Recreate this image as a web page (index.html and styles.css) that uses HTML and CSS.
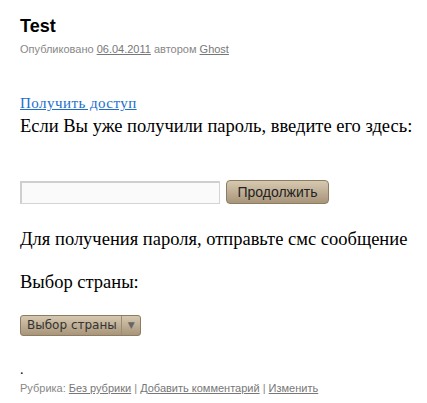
FILE: index.html
```html
<!DOCTYPE html>
<html>
<head>
<meta charset="utf-8">
<link rel="stylesheet" href="styles.css">
</head>
<body>
<div class="post">
  <h1 class="title">Test</h1>
  <div class="meta">Опубликовано <a href="#">06.04.2011</a> автором <a href="#">Ghost</a></div>
  <div class="content">
    <a class="access" href="#">Получить доступ</a>
    <p class="lead">Если Вы уже получили пароль, введите его здесь:</p>
    <form class="pass-form">
      <input class="pass-input" type="text">
      <button class="btn" type="button">Продолжить</button>
    </form>
    <p class="text">Для получения пароля, отправьте смс сообщение</p>
    <p class="text">Выбор страны:</p>
    <div class="select">
      <span class="select-label">Выбор страны</span>
      <span class="select-arrow">▼</span>
    </div>
    <p class="dot">.</p>
  </div>
  <div class="footer">Рубрика: <a href="#">Без рубрики</a> | <a href="#">Добавить комментарий</a> | <a href="#">Изменить</a></div>
</div>
</body>
</html>
```

FILE: styles.css
```css
html, body { margin: 0; padding: 0; background: #fff; }
.post { padding: 14px 4px 0 20px; }
.title {
  margin: 0;
  font-family: "Liberation Sans", Arial, sans-serif;
  font-weight: bold;
  font-size: 18px;
  line-height: 24px;
  color: #000;
}
.meta, .footer {
  font-family: "Liberation Sans", Arial, sans-serif;
  font-size: 11px;
  line-height: 16px;
  color: #888;
}
.meta { margin-top: 3px; }
.meta a, .footer a { color: #777; text-decoration: underline; }
.content {
  font-family: "Liberation Serif", "Times New Roman", serif;
  color: #000;
  margin-top: 37px;
}
.access {
  display: block;
  font-size: 15px;
  letter-spacing: 0.45px;
  line-height: 18px;
  color: #1a6ecc;
  text-decoration: underline;
}
.lead, .text {
  margin: 0;
  font-size: 18.5px;
  line-height: 24px;
  white-space: nowrap;
}
.lead { margin-top: 2px; }
.pass-form {
  margin: 42px 0 23px;
  display: flex;
  align-items: center;
  gap: 6px;
}
.pass-input {
  box-sizing: border-box;
  width: 200px;
  height: 23px;
  margin: 0;
  border: 1px solid #d4d4d4;
  border-top: 2px solid #cfcfcf;
  border-left: 2px solid #cfcfcf;
  background: #fafafa;
}
.btn {
  box-sizing: border-box;
  width: 103px;
  height: 24px;
  margin: 0;
  padding: 0;
  border: 1px solid #8c7c62;
  border-radius: 4px;
  background: linear-gradient(#d6c8b0, #a8957a);
  font-family: "Liberation Sans", Arial, sans-serif;
  font-size: 14px;
  color: #222;
}
.text + .text { margin-top: 19px; }
.select {
  margin-top: 21px;
  display: inline-flex;
  align-items: stretch;
  box-sizing: border-box;
  height: 21px;
  border: 1px solid #8c7c62;
  border-radius: 3px;
  background: linear-gradient(#d6c8b0, #a8957a);
  font-family: "DejaVu Sans", sans-serif;
  font-size: 12px;
  color: #333;
}
.select-label { padding: 0 4px 0 6px; line-height: 19px; }
.select-arrow {
  border-left: 1px solid #9c8c72;
  padding: 0 5px 0 6px;
  font-size: 9px;
  line-height: 19px;
  color: #666;
}
.dot { margin: 26px 0 0; font-size: 14px; line-height: 16px; }
.footer { margin-top: 2px; }
```
